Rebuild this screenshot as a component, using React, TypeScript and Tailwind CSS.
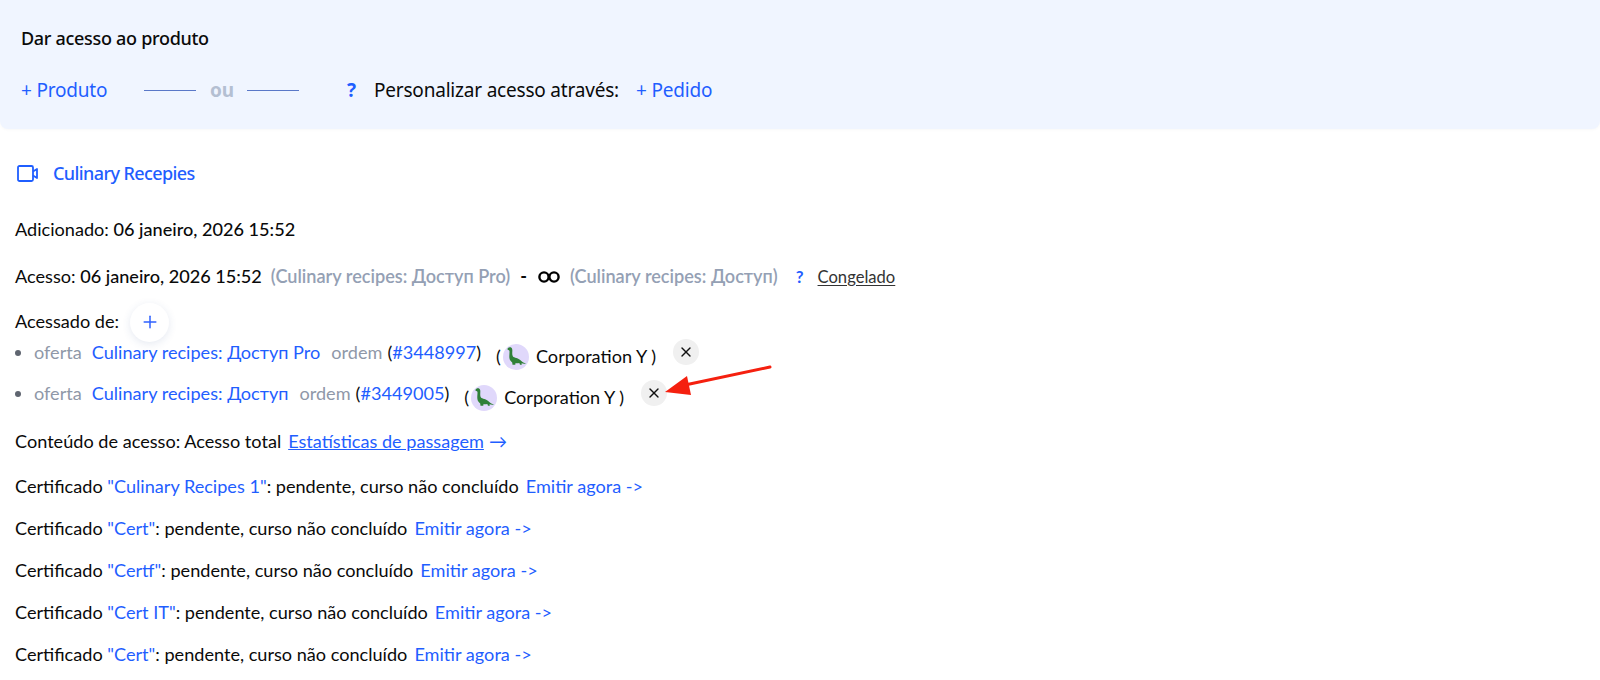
import { Plus, X } from "lucide-react";

const Dino = () => (
  <span className="flex items-center justify-center w-[26px] h-[26px] rounded-full bg-[#e0d8fb] shrink-0">
    <svg viewBox="0 0 26 26" className="w-[26px] h-[26px]">
      <path
        d="M4.500 4.700c.4-1.300 2.600-2 3.900-1 1 .8 1 2.200.9 3.800-.1 1.800-.2 3.500.5 4.700.7 1.100 2.100 1.300 3.600 1.700 1.900.5 3.500 1.500 4.900 3 1.100 1.100 2.700 1.900 4.700 2.500-1.500.4-3 .3-4.500-.2l.3 1.500h-1.800l-.7-1.700c-1.300.3-2.600.4-3.900.2l-.1 1.500H9.500l-.3-2.300c-1.500-.9-2.500-2.400-2.800-4.400-.3-2.200.2-4.500.1-6.700 0-.8-.4-1.200-1.100-1.300-.7-.1-1-.5-.9-1.300z"
        fill="#2f8038"
      />
    </svg>
  </span>
);

const Question = () => <span className="font-bold text-[#1f5eff]">?</span>;

const AccessRow = ({ offer, order }: { offer: string; order: string }) => (
  <div className="flex items-center h-[41px] pl-[15px]">
    <span className="w-[6px] h-[6px] rounded-full bg-[#5f6570] mr-[13px]" />
    <span className="text-[#8f98a8]">oferta</span>
    <a className="ml-[10px] text-[#1f5eff]">{offer}</a>
    <span className="ml-[11px] text-[#8f98a8]">ordem</span>
    <span className="ml-[5px]">
      (<a className="text-[#1f5eff]">{order}</a>)
    </span>
    <span className="flex items-center ml-[15px] translate-y-[4px]">
      <span className="mr-[2px]">(</span>
      <Dino />
      <span className="ml-[7px]">Corporation Y )</span>
    </span>
    <button className="flex items-center justify-center w-[26px] h-[26px] ml-[17px] -translate-y-px rounded-full bg-[#f0f0f0]">
      <X size={16} strokeWidth={2} color="#111" />
    </button>
  </div>
);

const Certificate = ({ name }: { name: string }) => (
  <p className="h-[42px] flex items-center pl-[15px]">
    Certificado&nbsp;
    <a className="text-[#1f5eff]">"{name}"</a>: pendente, curso não concluído
    <a className="ml-[7px] text-[#1f5eff]">Emitir agora -&gt;</a>
  </p>
);

export default function App() {
  return (
    <div className="relative w-[1600px] h-[680px] overflow-hidden bg-white text-[18.12px] text-[#0a0a0a] font-['Lato','Noto_Sans',sans-serif]">
      <section className="h-[129px] pl-[21px] pt-[27px] bg-[#f0f5ff] rounded-b-lg shadow-[0_1px_3px_rgba(0,0,0,0.03)] font-['Noto_Sans',sans-serif]">
        <h2 className="text-[18px] leading-[22px] font-medium tracking-[-0.3px]">Dar acesso ao produto</h2>
        <div className="flex items-center mt-[30px] h-[22px] text-[19px] tracking-[-0.2px]">
          <a className="w-[123px] text-[#1f5eff]">+ Produto</a>
          <span className="w-[52px] h-px bg-[#5a78c8]" />
          <span className="w-[51px] pl-[14px] font-bold text-[#b4bfd2]">ou</span>
          <span className="w-[52px] h-px bg-[#5a78c8]" />
          <span className="ml-[48px] w-[27px]">
            <Question />
          </span>
          <span>Personalizar acesso através:</span>
          <a className="ml-[17px] text-[#1f5eff]">+ Pedido</a>
        </div>
      </section>

      <div className="flex items-center gap-[15px] pl-[17px] mt-[32px] h-[24px] text-[18px] text-[#1f5eff] font-medium font-['Noto_Sans',sans-serif] tracking-[-0.6px]">
        <svg viewBox="0 0 21 17" className="w-[21px] h-[17px]" fill="none" stroke="currentColor" strokeWidth="1.8" strokeLinejoin="round">
          <rect x="1" y="1" width="15" height="15" rx="1.5" />
          <path d="M16 6.500 20 4v9l-4-2.500" />
        </svg>
        <span>Culinary Recepies</span>
      </div>

      <p className="mt-[33px] h-[24px] flex items-center pl-[15px]">
        Adicionado:&nbsp;<span className="font-medium">06 janeiro, 2026 15:52</span>
      </p>

      <div className="mt-[23px] h-[24px] flex items-center pl-[15px]">
        Acesso:&nbsp;<span className="font-medium">06 janeiro, 2026 15:52</span>
        <span className="ml-[9px] font-semibold text-[#94a0b4]">(Culinary recipes: Доступ Pro)</span>
        <span className="ml-[10px] font-bold">-</span>
        <span className="ml-[11px] w-[23px] flex">
          <svg viewBox="0 0 22 12" className="w-[22px] h-[12px]" fill="none" stroke="#000" strokeWidth="2.4">
            <circle cx="6" cy="6" r="4.600" />
            <circle cx="16" cy="6" r="4.600" />
          </svg>
        </span>
        <span className="ml-[9px] font-semibold text-[#94a0b4]">(Culinary recipes: Доступ)</span>
        <span className="ml-[18px] text-[17px]">
          <Question />
        </span>
        <a className="ml-[14px] text-[16.6px] text-[#333] underline underline-offset-2">Congelado</a>
      </div>

      <div className="mt-[20px] h-[26px] flex items-center pl-[15px]">
        Acessado de:
        <button className="ml-[11px] flex items-center justify-center w-[39px] h-[39px] rounded-full bg-white shadow-[0_2px_8px_rgba(40,70,140,0.12)]">
          <Plus size={20} strokeWidth={1.8} color="#2f62ff" />
        </button>
      </div>

      <div className="mt-[-3px]">
        <AccessRow offer="Culinary recipes: Доступ Pro" order="#3448997" />
        <AccessRow offer="Culinary recipes: Доступ" order="#3449005" />
      </div>

      <p className="mt-[7px] mb-[3px] h-[42px] flex items-center pl-[15px]">
        Conteúdo de acesso: Acesso total
        <a className="ml-[7px] text-[#1f5eff] underline">Estatísticas de passagem</a>
        <span className="ml-[5px] text-[#1f5eff]">→</span>
      </p>

      <Certificate name="Culinary Recipes 1" />
      <Certificate name="Cert" />
      <Certificate name="Certf" />
      <Certificate name="Cert IT" />
      <Certificate name="Cert" />

      {/* seta vermelha por cima da captura */}
      <svg className="absolute left-[660px] top-[360px] w-[115px] h-[40px]" viewBox="0 0 115 40">
        <path d="M110 7 L25 25" stroke="#f5200f" strokeWidth="3" strokeLinecap="round" />
        <path d="M5 32 L27 16 L31 35 Z" fill="#f5200f" />
      </svg>
    </div>
  );
}
